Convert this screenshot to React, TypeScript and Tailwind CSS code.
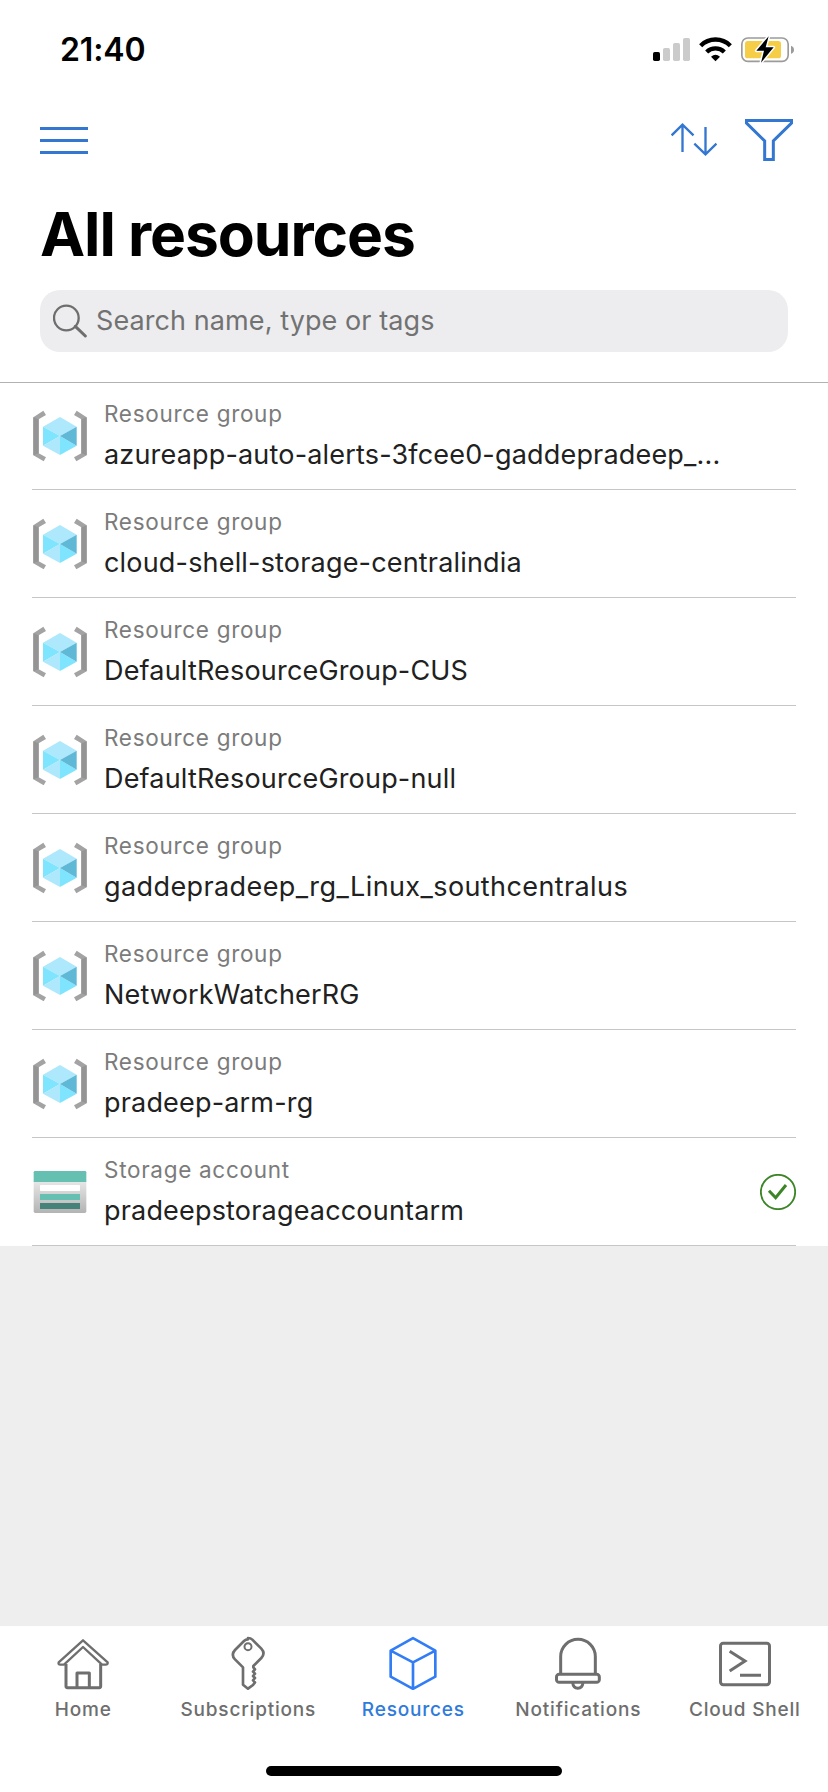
import type { ReactNode } from "react";

type Resource = { kind: "Resource group" | "Storage account"; name: string; healthy?: boolean; loose?: boolean };

const resources: Resource[] = [
  { kind: "Resource group", name: "azureapp-auto-alerts-3fcee0-gaddepradeep_..." },
  { kind: "Resource group", name: "cloud-shell-storage-centralindia" },
  { kind: "Resource group", name: "DefaultResourceGroup-CUS" },
  { kind: "Resource group", name: "DefaultResourceGroup-null" },
  { kind: "Resource group", name: "gaddepradeep_rg_Linux_southcentralus", loose: true },
  { kind: "Resource group", name: "NetworkWatcherRG" },
  { kind: "Resource group", name: "pradeep-arm-rg" },
  { kind: "Storage account", name: "pradeepstorageaccountarm", healthy: true },
];

function StatusIcons() {
  return (
    <svg className="h-[30px] w-[144px]" viewBox="96 102 432 90" fill="none">
      <rect x="99" y="156" width="21" height="27" rx="5" fill="#000" />
      <rect x="129" y="144" width="21" height="39" rx="5" fill="#cbcbcb" />
      <rect x="159" y="129" width="21" height="54" rx="5" fill="#cbcbcb" />
      <rect x="189" y="114" width="21" height="69" rx="5" fill="#cbcbcb" />
      <path d="M242 137a63 63 0 0 1 89 0" stroke="#000" strokeWidth="13" />
      <path d="M260 156a38 38 0 0 1 53 0" stroke="#000" strokeWidth="13" />
      <path d="M273 170q13.500-11 27 0l-13.500 14z" fill="#000" />
      <rect x="365.500" y="114" width="139" height="70" rx="18" stroke="#9b9b9b" strokeWidth="5" />
      <rect x="375" y="123" width="108" height="52" rx="8" fill="#f6cd46" />
      <path d="M513 137q9 3 9 12t-9 12z" fill="#9b9b9b" />
      <path d="M446 109l-37 43h23l-9 36 38-46h-24z" fill="#000" stroke="#fff" strokeWidth="9" strokeLinejoin="round" paintOrder="stroke" />
    </svg>
  );
}

function ResourceGroupIcon() {
  return (
    <svg className="h-[52px] w-[54px]" viewBox="39 60 162 156">
      <path d="M40 82L70 62l8 13-22 13v102l22 12-7 12-31-18z" fill="#a3a3a3" />
      <path d="M40 82l16 6v102l-16 6z" fill="#949494" />
      <path d="M200 82L170 62l-8 13 22 13v102l-22 12 7 12 31-18z" fill="#a3a3a3" />
      <path d="M200 82l-16 6v102l16 6z" fill="#949494" />
      <path d="M120 81l50 29-50 28-51-28z" fill="#ade8fc" />
      <path d="M69 110l51 28-51 29z" fill="#7fe4fd" />
      <path d="M69 167l51-29v57z" fill="#ade8fc" />
      <path d="M120 138l50 29-50 28z" fill="#7fe4fd" />
      <path d="M170 110v57l-50-29z" fill="#5fb8d6" />
    </svg>
  );
}

function StorageIcon() {
  return (
    <svg className="h-[52px] w-[54px]" viewBox="99 108 162 156">
      <defs>
        <linearGradient id="storageBody" x1="0" y1="0" x2="0" y2="1">
          <stop offset="0" stopColor="#e6e6e6" />
          <stop offset="1" stopColor="#b3b3b3" />
        </linearGradient>
      </defs>
      <path d="M101 155h158v89q0 5-5 5H106q-5 0-5-5z" fill="url(#storageBody)" />
      <path d="M101 156v-29q0-4 4-4h150q4 0 4 4v29z" fill="#66c0b2" />
      <rect x="120" y="165" width="120" height="18" rx="2" fill="#fff" />
      <rect x="120" y="192" width="120" height="18" rx="1" fill="#66c0b2" />
      <rect x="120" y="219" width="120" height="18" rx="1" fill="#44827a" />
    </svg>
  );
}

function HealthyIcon() {
  return (
    <svg className="size-9" viewBox="180 132 108 108" fill="none" stroke="#3c8527">
      <circle cx="234" cy="186" r="51.500" strokeWidth="5.500" />
      <path d="M207 182l20 21 31-38" strokeWidth="9" />
    </svg>
  );
}

function ResourceRow({ resource }: { resource: Resource }) {
  return (
    <li className="mx-8 flex h-[108px] items-center border-b border-[#c6c6c6]">
      <div className="ml-px pt-px">
        {resource.kind === "Resource group" ? <ResourceGroupIcon /> : <StorageIcon />}
      </div>
      <div className="ml-[17px] min-w-0 grow pt-[2px]">
        <div className="text-[22.5px] leading-7 tracking-[0.7px] text-[#7b7b7b]">{resource.kind}</div>
        <div
          className={
            resource.loose
              ? "mt-[9px] text-[27px] leading-9 tracking-[0.4px] whitespace-nowrap text-[#212121]"
              : "mt-[9px] text-[27px] leading-9 tracking-[0.18px] whitespace-nowrap text-[#212121]"
          }
        >
          {resource.name}
        </div>
      </div>
      {resource.healthy && <HealthyIcon />}
    </li>
  );
}

function Tab({ label, viewBox, active, children }: { label: string; viewBox: string; active?: boolean; children: ReactNode }) {
  return (
    <a className={active ? "flex flex-col items-center text-[#2f7bdb]" : "flex flex-col items-center text-[#6e6e6e]"}>
      <svg
        className="size-[54px]"
        viewBox={viewBox}
        fill="none"
        stroke={active ? "#327df6" : "currentColor"}
        strokeWidth={active ? 8 : 9}
        strokeLinejoin="round"
      >
        {children}
      </svg>
      <span className="mt-2 pl-[1.6px] text-[19px] leading-6 font-medium tracking-[0.8px] whitespace-nowrap">{label}</span>
    </a>
  );
}

export default function App() {
  return (
    <div className="flex h-[1792px] w-[828px] flex-col bg-[#eeeeee] font-['Inter','Liberation_Sans',sans-serif]">
      <header className="relative h-[382px] bg-white px-10 shadow-[0_1px_0_#b2b2b2]">
        <div className="flex h-[119px] items-start justify-between pt-[34px] pl-5">
          <span className="text-[32px] leading-8 font-semibold tracking-[-0.1px]">21:40</span>
          <div className="-mr-2">
            <StatusIcons />
          </div>
        </div>
        <div className="flex h-[42px] items-center">
          <svg className="h-[42px] w-12" viewBox="40 119 48 42" fill="#3377d0">
            <path d="M40 127h48v3H40zM40 139h48v3H40zM40 151h48v3H40z" />
          </svg>
          <svg className="ml-auto h-[42px] w-[46px]" viewBox="153 357 138 126" fill="none" stroke="#3377d0" strokeWidth="7">
            <path d="M187.500 456v-82M155 406l32.500-32 33 32M256.500 381v82M223 431l33.500 32 33-32" />
          </svg>
          <svg className="-mr-[5px] ml-7 h-[42px] w-12" viewBox="375 357 144 126" fill="none" stroke="#3377d0" strokeWidth="9">
            <path d="M379.500 361.500h135v8L460 423v55.500h-26V423l-54.500-53.500z" />
          </svg>
        </div>
        <h1 className="mt-[37px] text-[60.5px] leading-[72px] font-bold tracking-[-1.08px]">All resources</h1>
        <div className="mt-5 flex h-[62px] items-center rounded-[20px] bg-[#ededef] pl-[13px] text-[#727272]">
          <svg className="size-[34px]" viewBox="159 341 102 102" fill="none" stroke="#6e6e6e">
            <circle cx="199" cy="383" r="37" strokeWidth="7" />
            <path d="M226 408l30 29" strokeWidth="9" strokeLinecap="round" />
          </svg>
          <span className="ml-[9px] text-[27px] leading-9 tracking-[0.09px]">Search name, type or tags</span>
        </div>
      </header>

      <ul className="bg-white">
        {resources.map((resource) => (
          <ResourceRow key={resource.name} resource={resource} />
        ))}
      </ul>

      <footer className="mt-auto flex h-[166px] flex-col items-center justify-between bg-white pt-[10px] pb-4">
        <nav className="grid grid-cols-[165px_165px_165px_165px_168px]">
          <Tab label="Home" viewBox="168 78 162 162">
            <path d="M198 162v67q0 4 4 4h96q4 0 4-4v-67M231 231v-42h37v42" />
            <path d="M249 91l-73 66q-2 7 5 7h11l57-53 57 53h11q7 0 6-7z" strokeWidth="7" />
          </Tab>
          <Tab label="Subscriptions" viewBox="663 78 162 162">
            <path d="M744 88q-7 0-12 5l-27 27q-13 14 0 28l24 24v52l15 12 15-11 6-8-6-6 6-7-6-6 6-7-6-6 6-7-5-6v-4l24-24q13-14 0-28l-27-27q-5-5-13-5z" strokeWidth="8" />
            <circle cx="744" cy="110" r="10.500" strokeWidth="6" />
          </Tab>
          <Tab label="Resources" viewBox="1158 78 162 162" active>
            <path d="M1239 84.500l67 37.500v78l-67 36.500-67-36.500v-78zM1172 122l67 35 67-35M1239 157v79" />
          </Tab>
          <Tab label="Notifications" viewBox="411 78 162 162">
            <path d="M440 193v-53a51.500 51.500 0 0 1 104 0v53" />
            <rect x="427.500" y="193" width="128.500" height="24" rx="8" />
            <path d="M476 218q2 17 15.500 17t15.500-17" />
          </Tab>
          <Tab label="Cloud Shell" viewBox="909 78 162 162">
            <rect x="919.500" y="100" width="147" height="124" rx="8" />
            <path d="M947 124l46 29-46 30M978 196h63" strokeLinejoin="miter" />
          </Tab>
        </nav>
        <div className="h-[10px] w-[296px] rounded-full bg-black" />
      </footer>
    </div>
  );
}
